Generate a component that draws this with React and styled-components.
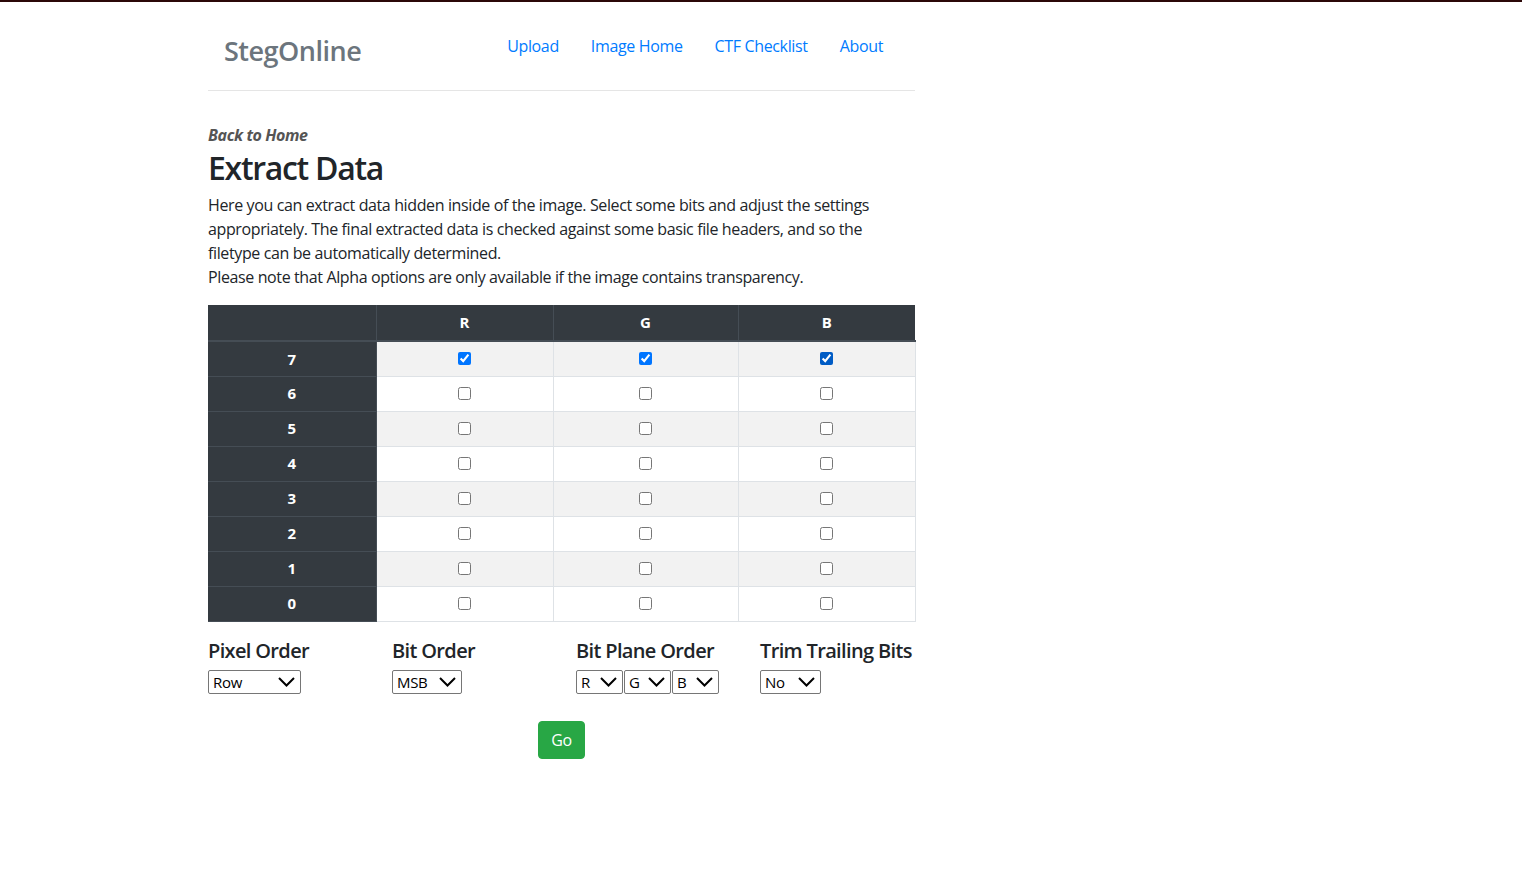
import React from "react";
import styled, { createGlobalStyle } from "styled-components";

const Global = createGlobalStyle`
  html, body { margin: 0; padding: 0; background: #fff; }
  body {
    font-family: "Open Sans", "Noto Sans", sans-serif;
    font-size: 16px;
    line-height: 1.5;
    color: #212529;
  }
  * { box-sizing: border-box; }
`;

const TopLine = styled.div`
  height: 2px;
  background: #2b0808;
`;

const Page = styled.div`
  width: 707px;
  margin-left: 208px;
`;

const Navbar = styled.nav`
  display: flex;
  align-items: center;
  justify-content: space-between;
  height: 89px;
  padding: 0 16px;
  border-bottom: 1px solid #e5e5e5;
`;

const Brand = styled.a`
  font-size: 27px;
  font-weight: 600;
  color: #6c757d;
  letter-spacing: -0.5px;
  margin-top: 10px;
  text-decoration: none;
`;

const NavLinks = styled.div`
  display: flex;
`;

const NavLink = styled.a`
  padding: 0 16px;
  color: #007bff;
  font-size: 16px;
  letter-spacing: -0.35px;
  text-decoration: none;
`;

const Main = styled.main`
  padding-top: 32px;
`;

const BackLink = styled.a`
  display: block;
  font-weight: 700;
  font-style: italic;
  color: #555;
  font-size: 16px;
  letter-spacing: -0.4px;
  line-height: 24px;
  text-decoration: none;
`;

const Title = styled.h2`
  margin: 2px 0 6px;
  font-size: 32px;
  font-weight: 600;
  line-height: 38px;
  letter-spacing: -1.3px;
  color: #212529;
`;

const Para = styled.p`
  margin: 0 0 16px;
  font-size: 16px;
  line-height: 24px;
  letter-spacing: -0.38px;
  white-space: nowrap;
`;

const Table = styled.table`
  width: 707px;
  border-collapse: collapse;
  margin: 0;
  table-layout: fixed;
`;

const HeadCell = styled.th`
  background: #343a40;
  color: #fff;
  font-size: 15px;
  font-weight: 700;
  height: 36px;
  padding: 0;
  text-align: center;
  border: 1px solid #454d55;
  border-bottom-width: 2px;
  border-top: none;
`;

const RowHead = styled.th`
  background: #343a40;
  color: #fff;
  font-size: 15px;
  font-weight: 700;
  height: 35px;
  padding: 0;
  text-align: center;
  border: 1px solid #454d55;
  border-left: none;
`;

const Row = styled.tr`
  background: ${(p) => (p.$striped ? "#f2f2f2" : "#fff")};
`;

const Cell = styled.td`
  height: 35px;
  padding: 0;
  text-align: center;
  vertical-align: middle;
  border: 1px solid #dee2e6;
`;

const Check = styled.input`
  display: block;
  width: 13px;
  height: 13px;
  margin: -1px auto 0;
  accent-color: ${(p) => p.$accent || "#0075ff"};
`;

const Options = styled.div`
  display: grid;
  grid-template-columns: repeat(4, 184px);
  margin-top: 17px;
`;

const OptLabel = styled.h5`
  margin: 0 0 7px;
  font-size: 20px;
  font-weight: 600;
  line-height: 24px;
  letter-spacing: -0.65px;
  white-space: nowrap;
`;

const SelectGroup = styled.div`
  display: flex;
  gap: 1px;
`;

const SelectWrap = styled.div`
  position: relative;
  width: ${(p) => p.$w}px;
  height: 24px;
`;

const Select = styled.select`
  appearance: none;
  -webkit-appearance: none;
  width: 100%;
  height: 24px;
  margin: 0;
  padding: 0 0 0 4px;
  border: 1px solid #767676;
  border-radius: 2px;
  background: #fff;
  color: #000;
  font-family: "Open Sans", "Noto Sans", sans-serif;
  font-size: 15px;
  letter-spacing: -0.3px;
  line-height: 22px;
`;

const Chevron = styled.svg`
  position: absolute;
  right: 6px;
  top: 7px;
  width: 17px;
  height: 10px;
  pointer-events: none;
`;

const GoRow = styled.div`
  display: flex;
  justify-content: center;
  margin-top: 27px;
`;

const GoButton = styled.button`
  height: 38px;
  padding: 0 12px;
  border: 1px solid #28a745;
  border-radius: 4px;
  background: #28a745;
  color: #fff;
  font-family: "Open Sans", "Noto Sans", sans-serif;
  font-size: 16px;
  letter-spacing: -0.3px;
  cursor: pointer;
`;

function Dropdown({ w, value, options }) {
  return (
    <SelectWrap $w={w}>
      <Select defaultValue={value}>
        {options.map((o) => (
          <option key={o}>{o}</option>
        ))}
      </Select>
      <Chevron viewBox="0 0 17 10">
        <path d="M1 1 L8.5 8.5 L16 1" fill="none" stroke="#000" strokeWidth="2" />
      </Chevron>
    </SelectWrap>
  );
}

const bits = [7, 6, 5, 4, 3, 2, 1, 0];

export default function App() {
  return (
    <>
      <Global />
      <TopLine />
      <Page>
        <Navbar>
          <Brand href="#">StegOnline</Brand>
          <NavLinks>
            <NavLink href="#">Upload</NavLink>
            <NavLink href="#">Image Home</NavLink>
            <NavLink href="#">CTF Checklist</NavLink>
            <NavLink href="#">About</NavLink>
          </NavLinks>
        </Navbar>
        <Main>
          <BackLink href="#">Back to Home</BackLink>
          <Title>Extract Data</Title>
          <Para>
            Here you can extract data hidden inside of the image. Select some bits and adjust the settings
            <br />
            appropriately. The final extracted data is checked against some basic file headers, and so the
            <br />
            filetype can be automatically determined.
            <br />
            Please note that Alpha options are only available if the image contains transparency.
          </Para>
          <Table>
            <colgroup>
              <col style={{ width: 168 }} />
              <col style={{ width: 177 }} />
              <col style={{ width: 185 }} />
              <col style={{ width: 177 }} />
            </colgroup>
            <thead>
              <tr>
                <HeadCell style={{ borderLeft: "none" }}></HeadCell>
                <HeadCell>R</HeadCell>
                <HeadCell>G</HeadCell>
                <HeadCell style={{ borderRight: "none" }}>B</HeadCell>
              </tr>
            </thead>
            <tbody>
              {bits.map((b, i) => (
                <Row key={b} $striped={i % 2 === 0}>
                  <RowHead>{b}</RowHead>
                  <Cell>
                    <Check type="checkbox" defaultChecked={b === 7} />
                  </Cell>
                  <Cell>
                    <Check type="checkbox" defaultChecked={b === 7} />
                  </Cell>
                  <Cell>
                    <Check type="checkbox" defaultChecked={b === 7} $accent="#005cc5" />
                  </Cell>
                </Row>
              ))}
            </tbody>
          </Table>
          <Options>
            <div>
              <OptLabel>Pixel Order</OptLabel>
              <Dropdown w={93} value="Row" options={["Row", "Column"]} />
            </div>
            <div>
              <OptLabel>Bit Order</OptLabel>
              <Dropdown w={70} value="MSB" options={["MSB", "LSB"]} />
            </div>
            <div>
              <OptLabel>Bit Plane Order</OptLabel>
              <SelectGroup>
                <Dropdown w={47} value="R" options={["R", "G", "B"]} />
                <Dropdown w={47} value="G" options={["R", "G", "B"]} />
                <Dropdown w={47} value="B" options={["R", "G", "B"]} />
              </SelectGroup>
            </div>
            <div>
              <OptLabel>Trim Trailing Bits</OptLabel>
              <Dropdown w={61} value="No" options={["No", "Yes"]} />
            </div>
          </Options>
          <GoRow>
            <GoButton>Go</GoButton>
          </GoRow>
        </Main>
      </Page>
    </>
  );
}
